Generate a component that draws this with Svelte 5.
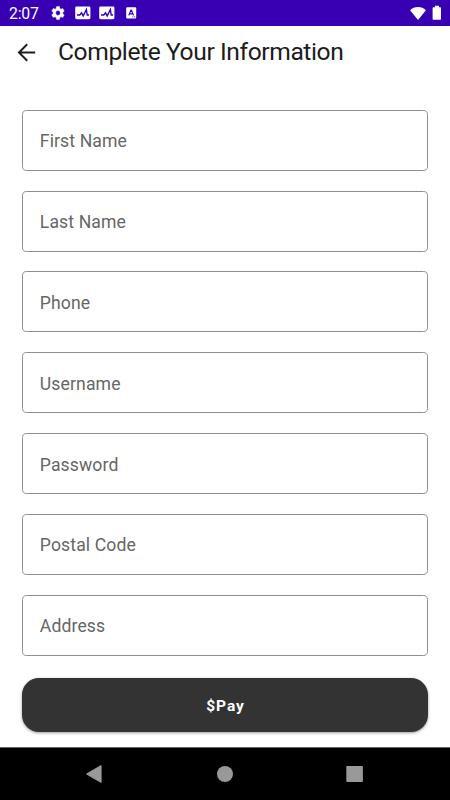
<script>
  const fields = ['First Name', 'Last Name', 'Phone', 'Username', 'Password', 'Postal Code', 'Address'];
</script>

{#snippet activity()}
  <svg width="16" height="14" viewBox="0 0 16 14">
    <rect x="0.2" y="0.6" width="15.2" height="12.6" rx="1.4" fill="#fff" />
    <path d="M2 9h2.800L6.500 6.800 8.200 9.900 11.400 3.500 12.200 9h1.800" fill="none" stroke="#3700b3" stroke-width="1.400" />
  </svg>
{/snippet}

<div class="screen">
  <div class="status">
    <span class="time">2:07</span>
    <svg class="gear" width="16" height="16" viewBox="0 0 24 24">
      <path fill="#fff" stroke="#fff" stroke-width="0.6" d="M19.14 12.94c.04-.3.06-.61.06-.94s-.02-.64-.07-.94l2.03-1.58c.18-.14.23-.41.12-.61l-1.92-3.32c-.12-.22-.37-.29-.59-.22l-2.39.96c-.5-.38-1.03-.7-1.62-.94l-.36-2.54c-.04-.24-.24-.41-.48-.41h-3.84c-.24 0-.43.17-.47.41l-.36 2.54c-.59.24-1.13.57-1.62.94l-2.39-.96c-.22-.08-.47 0-.59.22L2.740 8.870c-.12.21-.08.47.12.61l2.030 1.580c-.05.3-.09.63-.09.94s.02.64.07.94l-2.030 1.580c-.18.14-.23.41-.12.61l1.920 3.320c.12.22.37.29.59.22l2.390-.96c.5.38 1.030.7 1.620.94l.36 2.540c.05.24.24.41.48.41h3.840c.24 0 .44-.17.47-.41l.36-2.540c.59-.24 1.130-.56 1.620-.94l2.390.96c.22.08.47 0 .59-.22l1.920-3.320c.12-.22.07-.47-.12-.61l-2.010-1.580zM12 15.600A3.600 3.600 0 1 1 12 8.400a3.600 3.600 0 0 1 0 7.200z" />
    </svg>
    <span class="chart">{@render activity()}</span>
    <span class="chart second">{@render activity()}</span>
    <svg class="letter" width="11" height="12" viewBox="0 0 11 12">
      <rect x="0.2" y="0.2" width="10" height="11.4" rx="1" fill="#fff" />
      <path d="M2.800 8.400 4.900 3.100h.5l2.100 5.300M3.600 6.900h3.100" fill="none" stroke="#3700b3" stroke-width="1.200" />
      <path d="M6.400 9.800h1M8.200 9.800h1" stroke="#3700b3" stroke-width="0.8" />
    </svg>
    <span class="spacer"></span>
    <svg width="18" height="15" viewBox="0 0 18 15">
      <path d="M9 14 1.100 4.200C3.200 2.200 6 1.100 9 1.100s5.800 1.100 7.900 3.100z" fill="#fff" />
    </svg>
    <svg class="battery" width="10" height="16" viewBox="0 0 10 16">
      <path d="M3 .8h4v1.500h1.200c.5 0 .8.400.8.800v10.900c0 .5-.4.800-.8.800H1.400c-.5 0-.8-.4-.8-.8V3.100c0-.5.400-.8.800-.8H3z" fill="#fff" />
    </svg>
  </div>

  <header>
    <svg width="20" height="20" viewBox="0 0 20 20">
      <path d="M18.200 10.500H2.200M10.200 2.300 2 10.500l8.200 8.200" fill="none" stroke="#1c1c1c" stroke-width="2" />
    </svg>
    <h1>Complete Your Information</h1>
  </header>

  <form onsubmit={(e) => e.preventDefault()}>
    {#each fields as name}
      <div class="field"><span>{name}</span></div>
    {/each}
    <button>$Pay</button>
  </form>

  <nav>
    <svg width="450" height="52" viewBox="0 0 450 52">
      <path d="M101 17.800v16.400L86.800 26z" fill="#999" stroke="#999" stroke-width="1.200" stroke-linejoin="round" />
      <circle cx="225" cy="26" r="8" fill="#999" />
      <rect x="346.300" y="17.900" width="16.600" height="16.200" rx="0.800" fill="#999" />
    </svg>
  </nav>
</div>

<style>
  .screen {
    width: 450px;
    height: 800px;
    display: flex;
    flex-direction: column;
    background: #fff;
    font-family: Roboto, sans-serif;
    overflow: hidden;
  }
  .status {
    height: 26px;
    flex: none;
    display: flex;
    align-items: center;
    box-sizing: border-box;
    padding: 0 8px 0 9px;
    background: #3700b3;
    color: #fff;
  }
  .status svg { display: block; flex: none; }
  .time { width: 41px; font-size: 15.800px; letter-spacing: -0.200px; line-height: 26px; padding-top: 1px; box-sizing: border-box; height: 26px; }
  .gear { margin-right: 9px; }
  .chart { margin-right: 8px; }
  .chart.second { margin-right: 11px; }
  .spacer { flex: 1; }
  .battery { margin-left: 5px; }
  header {
    height: 52px;
    flex: none;
    display: flex;
    align-items: center;
    padding-left: 17px;
  }
  h1 {
    margin: 0 0 0 21px;
    font-size: 24.600px;
    letter-spacing: -0.400px;
    font-weight: 400;
    line-height: 32px;
    color: #1c1c1c;
    white-space: nowrap;
  }
  form {
    flex: 1;
    padding: 31.700px 22px 0;
    display: flex;
    flex-direction: column;
  }
  .field {
    height: 61px;
    flex: none;
    box-sizing: border-box;
    margin-bottom: 19.820px;
    border: 1px solid #8f8f8f;
    border-radius: 4.600px;
    display: flex;
    align-items: center;
    padding: 3.300px 0 0 16.800px;
    font-size: 17.600px;
    line-height: 21px;
    letter-spacing: 0.120px;
    color: #666;
  }
  button {
    height: 54.500px;
    margin-top: 2.300px;
    border: 0;
    padding: 2px 0 0 1px;
    border-radius: 17px;
    background: #333;
    color: #fff;
    font: 700 15.500px Roboto, sans-serif;
    letter-spacing: 0.900px;
    box-shadow: 0 1px 3px rgba(0, 0, 0, 0.4);
  }
  nav {
    height: 52px;
    flex: none;
    border-top: 1px solid #666;
    background: #000;
  }
  nav svg { display: block; }
</style>
